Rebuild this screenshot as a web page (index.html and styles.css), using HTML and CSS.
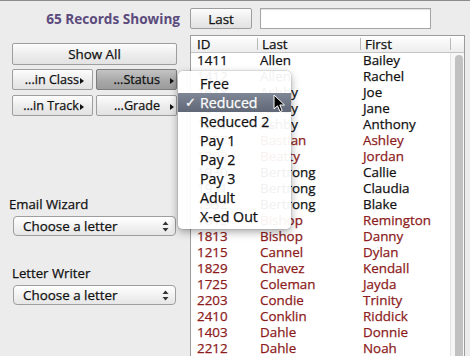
FILE: index.html
```html
<!DOCTYPE html>
<html lang="en">

<head>
  <meta charset="UTF-8">
  <title>Student List</title>
  <link rel="stylesheet" href="styles.css">
</head>

<body>

  <!-- top bar: count, sort button and search -->
  <div class="topbar">
    <div class="count">65 Records Showing</div>
    <div class="btn sort-btn">Last</div>
    <input type="text" class="search-box">
  </div>

  <div class="main">

    <!-- left side controls -->
    <div class="side">
      <div class="btn show-all">Show All</div>

      <div class="pick-row">
        <div class="btn pick">...in Class<span class="tri"></span></div>
        <div class="btn pick right pressed">...Status<span class="tri"></span></div>
      </div>
      <div class="pick-row">
        <div class="btn pick">...in Track<span class="tri"></span></div>
        <div class="btn pick right">...Grade<span class="tri"></span></div>
      </div>

      <div class="field-label email-label">Email Wizard</div>
      <div class="popup">
        Choose a letter
        <svg class="updown" width="7" height="11" viewBox="0 0 7 11">
          <path d="M3.5 0.5 L6.5 4 L0.5 4 Z" fill="#333" />
          <path d="M3.5 10.5 L6.5 7 L0.5 7 Z" fill="#333" />
        </svg>
      </div>

      <div class="field-label writer-label">Letter Writer</div>
      <div class="popup">
        Choose a letter
        <svg class="updown" width="7" height="11" viewBox="0 0 7 11">
          <path d="M3.5 0.5 L6.5 4 L0.5 4 Z" fill="#333" />
          <path d="M3.5 10.5 L6.5 7 L0.5 7 Z" fill="#333" />
        </svg>
      </div>
    </div>

    <!-- record list -->
    <div class="list">
      <div class="list-head">
        <div class="hcell c-id">ID</div>
        <div class="hcell c-last sep">Last</div>
        <div class="hcell c-first sep">First</div>
        <div class="hcell c-corner sep"></div>
      </div>
      <div class="list-body">
        <div class="rows">
          <div class="row"><span class="c-id">1411</span><span class="c-last">Allen</span><span class="c-first">Bailey</span></div>
          <div class="row"><span class="c-id">1412</span><span class="c-last">Allen</span><span class="c-first">Rachel</span></div>
          <div class="row"><span class="c-id">1618</span><span class="c-last">Ashby</span><span class="c-first">Joe</span></div>
          <div class="row"><span class="c-id">1619</span><span class="c-last">Ashby</span><span class="c-first">Jane</span></div>
          <div class="row"><span class="c-id">1620</span><span class="c-last">Ashby</span><span class="c-first">Anthony</span></div>
          <div class="row red"><span class="c-id">1307</span><span class="c-last">Bastian</span><span class="c-first">Ashley</span></div>
          <div class="row red"><span class="c-id">1308</span><span class="c-last">Beatty</span><span class="c-first">Jordan</span></div>
          <div class="row"><span class="c-id">1930</span><span class="c-last">Bertrong</span><span class="c-first">Callie</span></div>
          <div class="row"><span class="c-id">1931</span><span class="c-last">Bertrong</span><span class="c-first">Claudia</span></div>
          <div class="row"><span class="c-id">1932</span><span class="c-last">Bertrong</span><span class="c-first">Blake</span></div>
          <div class="row red"><span class="c-id">1812</span><span class="c-last">Bishop</span><span class="c-first">Remington</span></div>
          <div class="row red"><span class="c-id">1813</span><span class="c-last">Bishop</span><span class="c-first">Danny</span></div>
          <div class="row red"><span class="c-id">1215</span><span class="c-last">Cannel</span><span class="c-first">Dylan</span></div>
          <div class="row red"><span class="c-id">1829</span><span class="c-last">Chavez</span><span class="c-first">Kendall</span></div>
          <div class="row red"><span class="c-id">1725</span><span class="c-last">Coleman</span><span class="c-first">Jayda</span></div>
          <div class="row red"><span class="c-id">2203</span><span class="c-last">Condie</span><span class="c-first">Trinity</span></div>
          <div class="row red"><span class="c-id">2410</span><span class="c-last">Conklin</span><span class="c-first">Riddick</span></div>
          <div class="row red"><span class="c-id">1403</span><span class="c-last">Dahle</span><span class="c-first">Donnie</span></div>
          <div class="row red"><span class="c-id">2212</span><span class="c-last">Dahle</span><span class="c-first">Noah</span></div>
        </div>
        <div class="scroll">
          <div class="thumb"></div>
        </div>
      </div>
    </div>
  </div>

  <!-- status popup menu (open) -->
  <div class="menu">
    <div class="menu-item">Free</div>
    <div class="menu-item active"><span class="check">&#10003;</span>Reduced</div>
    <div class="menu-item">Reduced 2</div>
    <div class="menu-item">Pay 1</div>
    <div class="menu-item">Pay 2</div>
    <div class="menu-item">Pay 3</div>
    <div class="menu-item">Adult</div>
    <div class="menu-item">X-ed Out</div>
  </div>

  <!-- mouse pointer -->
  <svg class="cursor" width="13" height="19" viewBox="0 0 13 19">
    <path d="M1 1 L1 15 L4.5 11.8 L7 17.5 L9.2 16.6 L6.8 11 L11.5 11 Z" fill="#000" stroke="#fff" stroke-width="1" stroke-linejoin="round" />
  </svg>

</body>

</html>
```

FILE: styles.css
```css
/* page */
body {
  margin: 0;
  padding: 0;
  background-color: #ececec;
  border-top: 1px solid #8c8c8c;
  font-family: "Open Sans", sans-serif;
  font-size: 13px;
  color: #111;
  height: 355px;
  overflow: hidden;
  position: relative;
  -webkit-text-stroke: 0.25px currentColor;
}

/* top bar */
.topbar {
  display: flex;
  align-items: center;
  padding-top: 7px;
  height: 21px;
}

.count {
  width: 180px;
  padding-right: 10px;
  text-align: right;
  font-weight: bold;
  font-size: 13.6px;
  color: #5b4a7c;
  -webkit-text-stroke: 0;
}

.search-box {
  box-sizing: border-box;
  width: 171px;
  height: 21px;
  margin: 0 0 0 8px;
  border: 1px solid #a5a5a5;
  background-color: #fff;
  box-shadow: inset 0 1px 1px rgba(0, 0, 0, 0.12);
}

/* buttons */
.btn {
  box-sizing: border-box;
  display: flex;
  align-items: center;
  justify-content: center;
  height: 21px;
  border: 1px solid #9e9e9e;
  border-radius: 2px;
  background: linear-gradient(#fdfdfd, #ececec 55%, #e2e2e2);
  font-size: 13.4px;
  color: #111;
}

.sort-btn {
  width: 62px;
}

.main {
  display: flex;
  margin-top: 6px;
}

.side {
  width: 178px;
  padding: 8px 0 0 12px;
}

.show-all {
  width: 165px;
  height: 22px;
  margin-bottom: 4px;
}

.pick-row {
  display: flex;
  gap: 3px;
  margin-bottom: 5px;
}

.pick {
  width: 81px;
  justify-content: flex-end;
  padding-right: 8px;
  font-size: 12.6px;
}

.pick.right {
  padding-right: 2px;
}

.pick.right .tri {
  margin-left: 10px;
}

.pressed {
  border-color: #7d7d7d;
  background: linear-gradient(#c4c4c4, #a9a9a9 55%, #9c9c9c);
}

.tri {
  width: 0;
  height: 0;
  margin-left: 1px;
  margin-top: 2px;
  border-top: 3.5px solid transparent;
  border-bottom: 3.5px solid transparent;
  border-left: 4px solid #111;
}

/* popup fields */
.field-label {
  font-size: 13.2px;
  line-height: 16px;
  margin-bottom: 4px;
}

.email-label {
  margin-top: 80px;
  margin-left: -3px;
}

.writer-label {
  margin-top: 29px;
}

.popup {
  box-sizing: border-box;
  display: flex;
  align-items: center;
  justify-content: space-between;
  width: 163px;
  height: 20px;
  margin-left: 1px;
  padding: 0 6px 0 9px;
  border: 1px solid #9e9e9e;
  border-radius: 4px;
  background: linear-gradient(#ffffff, #f1f1f1 55%, #e6e6e6);
  font-size: 13.4px;
}

/* list */
.list {
  width: 273px;
  height: 325px;
  overflow: hidden;
  border: 1px solid #9c9c9c;
  border-bottom: none;
  background-color: #fff;
  font-size: 13.4px;
}

.list-head {
  display: flex;
  align-items: center;
  height: 16px;
  border-bottom: 1px solid #c4c4c4;
  background: linear-gradient(#ffffff, #ededed);
}

.hcell {
  box-sizing: border-box;
  height: 12px;
  line-height: 12px;
}

.sep {
  border-left: 1px solid #b8b8b8;
}

.c-id {
  box-sizing: border-box;
  width: 66px;
  padding-left: 6px;
}

.c-last {
  box-sizing: border-box;
  width: 103px;
  padding-left: 4px;
}

.c-first {
  box-sizing: border-box;
  width: 90px;
  padding-left: 4px;
}

.c-corner {
  width: 14px;
}

.list-body {
  display: flex;
}

.rows {
  width: 259px;
}

.row {
  display: flex;
  height: 16px;
  line-height: 15px;
  color: #111;
}

.row.red {
  color: #8c1b1b;
}

.row span {
  white-space: nowrap;
}

.row .c-last,
.row .c-first {
  padding-left: 3px;
}

.scroll {
  width: 13px;
  border-left: 1px solid #e4e4e4;
  background-color: #f7f7f7;
  padding-top: 2px;
}

.thumb {
  width: 8px;
  height: 320px;
  margin-left: 4px;
  border-radius: 4px;
  background-color: #c1c1c1;
}

/* popup menu over the list */
.menu {
  position: absolute;
  left: 178px;
  top: 70px;
  width: 113px;
  padding: 3px 0;
  background-color: rgba(255, 255, 255, 0.94);
  border-radius: 5px;
  box-shadow: 0 3px 9px rgba(0, 0, 0, 0.35), 0 0 0 1px rgba(0, 0, 0, 0.08);
}

.menu-item {
  position: relative;
  height: 19px;
  line-height: 19px;
  padding-left: 22px;
  font-size: 14.2px;
  color: #111;
}

.menu-item.active {
  color: #fff;
  background: linear-gradient(#7f8695, #606776);
}

.check {
  position: absolute;
  left: 7px;
  font-size: 13px;
}

.cursor {
  position: absolute;
  left: 273px;
  top: 93px;
}
```
